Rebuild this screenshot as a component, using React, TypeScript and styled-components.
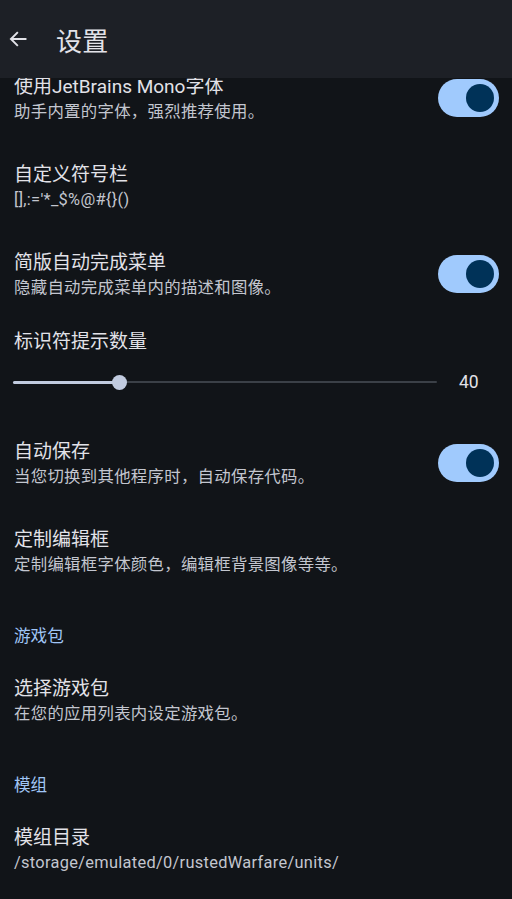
import { useState } from "react";
import styled, { createGlobalStyle } from "styled-components";

const GlobalStyle = createGlobalStyle`
  html, body {
    margin: 0;
    padding: 0;
    background: #111418;
  }
  body {
    font-family: Roboto, "Noto Sans CJK SC", sans-serif;
    -webkit-font-smoothing: antialiased;
  }
`;

const Page = styled.div`
  display: flex;
  flex-direction: column;
  width: 512px;
  height: 899px;
  background: #111418;
  overflow: hidden;
`;

const AppBar = styled.header`
  display: flex;
  align-items: center;
  flex: 0 0 78px;
  padding: 0 0 0 7px;
  background: #1d2026;
  position: relative;
  z-index: 1;
`;

const BackButton = styled.button`
  display: flex;
  align-items: center;
  justify-content: center;
  width: 22px;
  height: 22px;
  padding: 0;
  margin-right: 27px;
  border: none;
  background: transparent;
  color: #e2e2e8;
  cursor: pointer;
`;

const Title = styled.h1`
  margin: 0;
  font-size: 26px;
  font-weight: 400;
  color: #e2e2e8;
  letter-spacing: 0.3px;
`;

const Content = styled.main`
  flex: 1;
  overflow: hidden;
`;

/* list is scrolled down a little, the first row sits under the app bar */
const List = styled.div`
  display: flex;
  flex-direction: column;
  margin-top: -23px;
`;

const Row = styled.div`
  display: flex;
  align-items: center;
  height: 88px;
  padding: 0 13px 0 14px;
  box-sizing: border-box;
`;

const RowText = styled.div`
  flex: 1;
  display: flex;
  flex-direction: column;
  min-width: 0;
`;

const RowTitle = styled.div`
  font-size: 19px;
  line-height: 26px;
  color: #e2e2e8;
`;

const RowSummary = styled.div`
  font-size: 16.4px;
  line-height: 24px;
  letter-spacing: 0.3px;
  color: #c3c6cf;
  white-space: nowrap;
`;

const Track = styled.button<{ on: boolean }>`
  position: relative;
  flex: 0 0 61px;
  height: 38px;
  margin-top: -3px;
  padding: 0;
  border: none;
  border-radius: 19px;
  background: ${(p) => (p.on ? "#a0cafd" : "#3a3f47")};
  cursor: pointer;
`;

const Thumb = styled.span<{ on: boolean }>`
  position: absolute;
  top: 5px;
  left: ${(p) => (p.on ? "28px" : "5px")};
  width: 28px;
  height: 28px;
  border-radius: 50%;
  background: ${(p) => (p.on ? "#003258" : "#8d9199")};
`;

const SliderRow = styled.div`
  display: flex;
  flex-direction: column;
  padding: 10px 0 13px 14px;
`;

const SliderLine = styled.div`
  display: flex;
  align-items: center;
  height: 50px;
  margin-top: 2px;
`;

const SliderTrack = styled.div`
  position: relative;
  width: 424px;
  height: 2px;
  margin-left: -1px;
  background: #3b4047;
  border-radius: 1px;
`;

const SliderFill = styled.div`
  position: absolute;
  left: 0;
  top: -0.5px;
  height: 3px;
  background: #c1cbdf;
  border-radius: 2px;
`;

const SliderKnob = styled.div`
  position: absolute;
  top: 50%;
  width: 15px;
  height: 15px;
  margin: -7.5px 0 0 -7.5px;
  border-radius: 50%;
  background: #c1cbdf;
`;

const SliderValue = styled.span`
  margin-left: 22px;
  font-size: 17.5px;
  color: #e2e2e8;
`;

const Category = styled.div`
  padding: 30px 14px 9px;
  font-size: 16.6px;
  line-height: 22px;
  color: #a0c6f6;
`;

const ArrowIcon = () => (
  <svg width="20" height="20" viewBox="0 0 24 24" fill="none">
    <path
      d="M21 12H4M11 4.5L3.5 12l7.5 7.5"
      stroke="currentColor"
      strokeWidth="2.3"
      strokeLinecap="square"
    />
  </svg>
);

interface SwitchProps {
  defaultOn?: boolean;
}

const Switch = ({ defaultOn = true }: SwitchProps) => {
  const [on, setOn] = useState(defaultOn);
  return (
    <Track on={on} onClick={() => setOn((prev) => !prev)}>
      <Thumb on={on} />
    </Track>
  );
};

interface PrefProps {
  title: string;
  summary: string;
  toggle?: boolean;
}

const Pref = ({ title, summary, toggle }: PrefProps) => (
  <Row>
    <RowText>
      <RowTitle>{title}</RowTitle>
      <RowSummary>{summary}</RowSummary>
    </RowText>
    {toggle && <Switch />}
  </Row>
);

const App = () => {
  const value = 40;
  const pos = 25;
  return (
    <>
      <GlobalStyle />
      <Page>
        <AppBar>
          <BackButton aria-label="返回">
            <ArrowIcon />
          </BackButton>
          <Title>设置</Title>
        </AppBar>
        <Content>
          <List>
            <Pref
              title="使用JetBrains Mono字体"
              summary="助手内置的字体，强烈推荐使用。"
              toggle
            />
            <Pref title="自定义符号栏" summary="[],:='*_$%@#{}()" />
            <Pref
              title="简版自动完成菜单"
              summary="隐藏自动完成菜单内的描述和图像。"
              toggle
            />
            <SliderRow>
              <RowTitle>标识符提示数量</RowTitle>
              <SliderLine>
                <SliderTrack>
                  <SliderFill style={{ width: `${pos}%` }} />
                  <SliderKnob style={{ left: `${pos}%` }} />
                </SliderTrack>
                <SliderValue>{value}</SliderValue>
              </SliderLine>
            </SliderRow>
            <Pref
              title="自动保存"
              summary="当您切换到其他程序时，自动保存代码。"
              toggle
            />
            <Pref
              title="定制编辑框"
              summary="定制编辑框字体颜色，编辑框背景图像等等。"
            />
            <Category>游戏包</Category>
            <Pref title="选择游戏包" summary="在您的应用列表内设定游戏包。" />
            <Category>模组</Category>
            <Pref
              title="模组目录"
              summary="/storage/emulated/0/rustedWarfare/units/"
            />
          </List>
        </Content>
      </Page>
    </>
  );
};

export default App;
